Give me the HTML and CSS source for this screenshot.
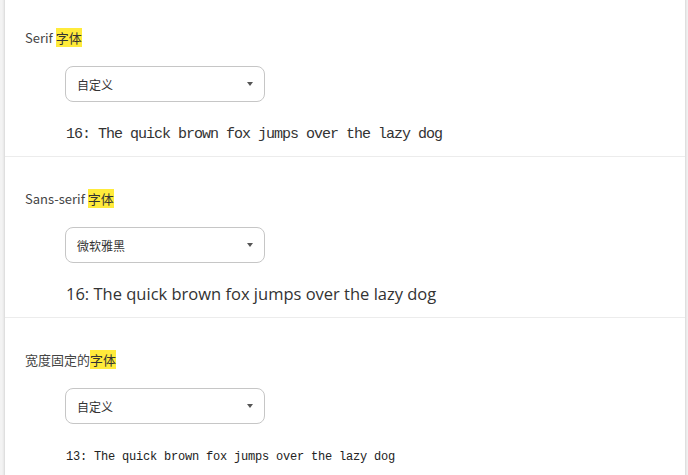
FILE: index.html
```html
<!DOCTYPE html>
<html lang="zh-CN">
<head>
<meta charset="utf-8">
<title>字体</title>
<link rel="stylesheet" href="styles.css">
</head>
<body>
<div class="card">
  <section class="section">
    <div class="label">Serif <mark class="hl">字体</mark></div>
    <div class="select"><span class="select-text">自定义</span><span class="arrow"></span></div>
    <div class="sample sample-serif">16: The quick brown fox jumps over the lazy dog</div>
  </section>
  <section class="section">
    <div class="label">Sans-serif <mark class="hl">字体</mark></div>
    <div class="select"><span class="select-text">微软雅黑</span><span class="arrow"></span></div>
    <div class="sample sample-sans">16: The quick brown fox jumps over the lazy dog</div>
  </section>
  <section class="section">
    <div class="label">宽度固定的<mark class="hl">字体</mark></div>
    <div class="select"><span class="select-text">自定义</span><span class="arrow"></span></div>
    <div class="sample sample-mono">13: The quick brown fox jumps over the lazy dog</div>
  </section>
</div>
</body>
</html>
```
FILE: styles.css
```css
html, body {
  margin: 0;
  padding: 0;
  background: #f3f3f3;
  overflow: hidden;
}
body {
  font-family: "Noto Sans CJK SC", "Noto Sans", sans-serif;
}
.card {
  margin: -4px 3px 0 5px;
  background: #fff;
  box-shadow: 0 0 3px rgba(0, 0, 0, 0.22);
  min-height: 500px;
}
.section {
  padding: 32px 20px 11px 20px;
  border-bottom: 1px solid #ececec;
}
.label {
  font-size: 13px;
  line-height: 20px;
  height: 20px;
  color: #444;
}
.hl {
  background: #ffeb3b;
  color: #333;
  padding: 0;
}
.select {
  margin: 18px 0 0 40px;
  width: 200px;
  height: 36px;
  box-sizing: border-box;
  border: 1px solid #c6c6c6;
  border-radius: 8px;
  display: flex;
  align-items: center;
  padding: 0 11px 0 11px;
}
.select-text {
  font-size: 12px;
  color: #333;
}
.arrow {
  margin-left: auto;
  width: 0;
  height: 0;
  border-left: 3.5px solid transparent;
  border-right: 3.5px solid transparent;
  border-top: 4px solid #555;
}
.sample {
  margin: 19px 0 0 41px;
  height: 24px;
  line-height: 24px;
  white-space: nowrap;
}
.sample-serif {
  font-family: "Liberation Mono", "DejaVu Sans Mono", monospace;
  font-size: 15px;
  letter-spacing: -1px;
  color: #333;
  padding-top: 2px;
  height: 22px;
}
.sample-sans {
  font-family: "Open Sans", "Noto Sans", sans-serif;
  font-size: 16.5px;
  color: #333;
}
.sample-mono {
  font-family: "Liberation Mono", "DejaVu Sans Mono", monospace;
  font-size: 12px;
  letter-spacing: -0.2px;
  color: #222;
  padding-top: 2px;
  height: 22px;
}
```
